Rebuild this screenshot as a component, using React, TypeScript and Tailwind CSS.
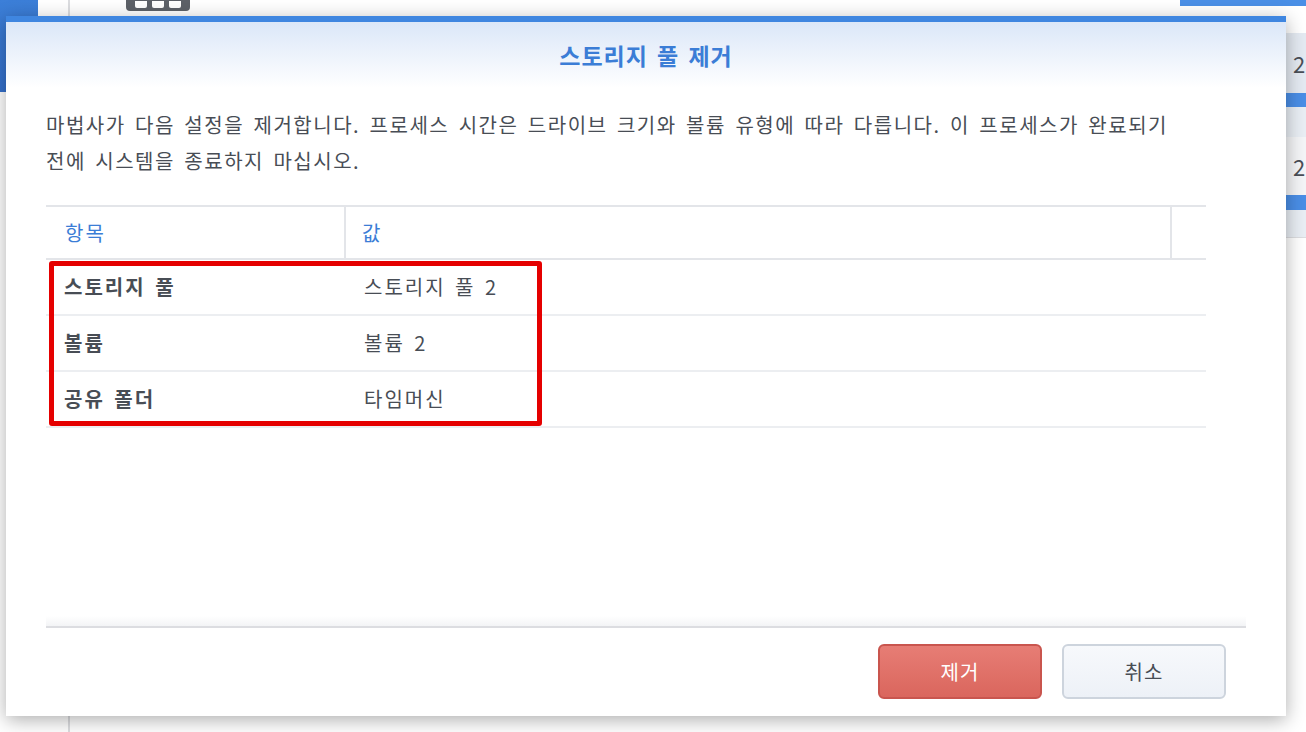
import React from "react";

const rows = [
    { label: "스토리지 풀", value: "스토리지 풀 2" },
    { label: "볼륨", value: "볼륨 2" },
    { label: "공유 폴더", value: "타임머신" },
];

const font = { fontFamily: '"Noto Sans CJK KR", "Noto Sans", sans-serif' };

// the page behind the dialog
function Backdrop() {
    return (
        <div className="absolute inset-0 bg-white">
            <div className="absolute left-0 top-0 w-[38px] h-[92px] bg-gradient-to-b from-[#3c7fd8] to-[#3470cc]" />
            <div className="absolute left-[68px] top-0 bottom-0 w-[2px] bg-[#dcdde0]" />
            <div className="absolute left-[126px] top-0 w-[64px] h-[11px] rounded-b-[4px] bg-[#5d6168] flex items-start justify-center gap-[5px] pt-[1px]">
                <div className="w-[12px] h-[7px] rounded-b-[2px] bg-white" />
                <div className="w-[12px] h-[7px] rounded-b-[2px] bg-white" />
                <div className="w-[12px] h-[7px] rounded-b-[2px] bg-white" />
            </div>
            <div className="absolute right-0 top-0 w-[126px] h-[6px] bg-[#4a8fe6]" />
            <div className="absolute right-0 top-[33px] w-[20px] flex flex-col text-[#4a4f57] text-[22px]" style={font}>
                <div className="h-[60px] bg-[#e4eaf2] flex items-center pl-[7px]">2</div>
                <div className="h-[14px] bg-[#4a8ee6]" />
                <div className="h-[30px] bg-[#e9eef4]" />
                <div className="h-[58px] bg-[#f4f5f7] flex items-center pl-[7px]">2</div>
                <div className="h-[15px] bg-[#4a8ee6]" />
                <div className="h-[28px] bg-[#e9eef4] border-b border-[#dcdde0]" />
            </div>
        </div>
    );
}

function Dialog() {
    return (
        <div className="absolute left-[6px] top-[16px] w-[1280px] h-[700px] bg-white flex flex-col shadow-[0_4px_18px_rgba(0,0,0,0.32)]" style={font}>
            <div className="h-[6px] bg-[#3f86e0]" />
            <div className="h-[66px] flex items-center justify-center bg-gradient-to-b from-[#dbe7f8] to-white">
                <span className="text-[23px] font-bold text-[#3b7dd6] tracking-[1px] [word-spacing:3px]">스토리지 풀 제거</span>
            </div>

            <div className="px-[40px] flex-1 flex flex-col">
                <p className="mt-[19px] text-[20px] leading-[36px] text-[#484d55] tracking-[1.5px] [word-spacing:3.5px] whitespace-nowrap">
                    마법사가 다음 설정을 제거합니다. 프로세스 시간은 드라이브 크기와 볼륨 유형에 따라 다릅니다. 이 프로세스가 완료되기<br />
                    전에 시스템을 종료하지 마십시오.
                </p>

                <div className="relative mt-[26px] w-[1160px] text-[20px] tracking-[2px] [word-spacing:3px]">
                    <div className="flex h-[55px] border-y-2 border-[#e3e5e9] text-[#3b7dd6]">
                        <div className="w-[300px] pl-[19px] flex items-center border-r-2 border-[#e3e5e9]">항목</div>
                        <div className="w-[826px] pl-[16px] flex items-center border-r-2 border-[#e3e5e9]">값</div>
                        <div className="flex-1" />
                    </div>
                    {rows.map(r => (
                        <div key={r.label} className="flex h-[56px] border-b-2 border-[#eceef1] text-[#484d55]">
                            <div className="w-[300px] pl-[18px] flex items-center font-bold">{r.label}</div>
                            <div className="pl-[18px] flex items-center">{r.value}</div>
                        </div>
                    ))}
                    <div className="absolute left-[3px] top-[56px] w-[493px] h-[165px] border-[5px] border-[#e50000] rounded-[3px]" />
                </div>

                <div className="flex-1" />
                <div className="h-[10px] bg-gradient-to-b from-white to-[#f3f4f6]" />
                <div className="h-[2px] bg-[#dcdde1]" />
                <div className="flex justify-end gap-[20px] pr-[20px] pt-[16px] pb-[17px]">
                    <button className="w-[164px] h-[55px] rounded-[6px] border-2 border-[#c9554e] bg-gradient-to-b from-[#e77d75] to-[#da665d] text-white text-[20px] tracking-[1px]">제거</button>
                    <button className="w-[164px] h-[55px] rounded-[6px] border-2 border-[#cdd4dd] bg-gradient-to-b from-[#f7f9fc] to-[#edf1f7] text-[#484d55] text-[20px] tracking-[1px]">취소</button>
                </div>
            </div>
        </div>
    );
}

export default function App() {
    return (
        <div className="relative w-[1306px] h-[732px] overflow-hidden">
            <Backdrop />
            <Dialog />
        </div>
    );
}
